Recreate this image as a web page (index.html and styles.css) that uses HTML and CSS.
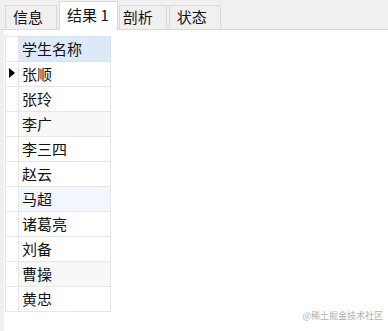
FILE: index.html
```html
<!DOCTYPE html>
<html>
<head>
	<meta charset="UTF-8">
	<title>结果</title>
	<link rel="stylesheet" href="styles.css">
</head>
<body>
	<div class="tabbar">
		<span class="tab">信息</span>
		<span class="tab active">结果 1</span>
		<span class="tab narrow">剖析</span>
		<span class="tab">状态</span>
	</div>
	<div class="content">
		<table class="grid">
			<tr class="head"><td class="ind"></td><td class="name">学生名称</td></tr>
			<tr><td class="ind"><i class="arrow"></i></td><td class="name">张顺</td></tr>
			<tr><td class="ind"></td><td class="name">张玲</td></tr>
			<tr class="gray"><td class="ind"></td><td class="name">李广</td></tr>
			<tr><td class="ind"></td><td class="name">李三四</td></tr>
			<tr><td class="ind"></td><td class="name">赵云</td></tr>
			<tr class="blue"><td class="ind"></td><td class="name">马超</td></tr>
			<tr><td class="ind"></td><td class="name">诸葛亮</td></tr>
			<tr><td class="ind"></td><td class="name">刘备</td></tr>
			<tr class="gray"><td class="ind"></td><td class="name">曹操</td></tr>
			<tr><td class="ind"></td><td class="name">黄忠</td></tr>
		</table>
	</div>
	<div class="mark">@稀土掘金技术社区</div>
</body>
</html>
```

FILE: styles.css
```css
*{margin:0;padding:0;}
html,body{
	width:388px;
	height:331px;
	overflow:hidden;
	background:#fff;
}
body{
	font-family:"Noto Sans CJK SC","Liberation Sans",sans-serif;
	font-size:15px;
	color:#111;
	position:relative;
}
.tabbar{
	height:29px;
	background:#f0f0f0;
	border-bottom:1px solid #d9d9d9;
	display:flex;
	align-items:flex-end;
	padding-left:5px;
	gap:2px;
}
.tab{
	height:23px;
	line-height:22px;
	padding:0 13px 0 7px;
	background:#f0f0f0;
	border:1px solid #d9d9d9;
	border-bottom:none;
	margin-right:0;
}
.tab.narrow{
	padding-left:3px;
	margin-left:-1px;
}
.tab.active{
	height:28px;
	line-height:26px;
	padding:0 8px 0 7px;
	background:#fff;
	margin-bottom:-1px;
}
.content{
	height:301px;
	border-left:4px solid #f0f0f0;
	padding:6px 0 0 1px;
}
.grid{
	border-collapse:collapse;
}
.grid td{
	height:24px;
	line-height:22px;
	border:1px solid #e6e6e6;
	padding:0;
}
.grid .ind{
	width:12px;
	position:relative;
}
.grid .name{
	width:88px;
	padding-left:3px;
}
.head .name{
	background:#dce9f7;
	border-color:#d6e3f0;
}
.gray .name{background:#f7f7f7;}
.blue .name{background:#f1f7fd;}
.arrow{
	position:absolute;
	left:3px;
	top:6px;
	width:0;
	height:0;
	border-top:5px solid transparent;
	border-bottom:5px solid transparent;
	border-left:6px solid #000;
}
.mark{
	position:absolute;
	right:5px;
	bottom:10px;
	font-size:9px;
	line-height:10px;
	color:#b0b0b0;
}
```
